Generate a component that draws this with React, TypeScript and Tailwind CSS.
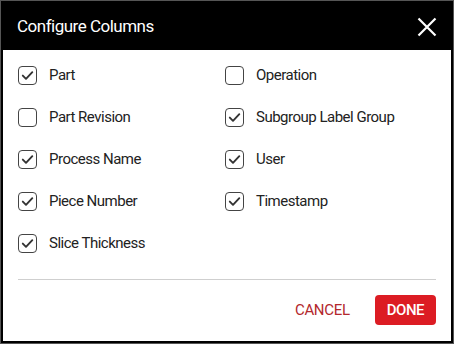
import React, { useState } from 'react';

type Column = { key: string; label: string; checked: boolean };

const initialColumns: Column[] = [
  { key: 'part', label: 'Part', checked: true },
  { key: 'operation', label: 'Operation', checked: false },
  { key: 'partRevision', label: 'Part Revision', checked: false },
  { key: 'subgroup', label: 'Subgroup Label Group', checked: true },
  { key: 'processName', label: 'Process Name', checked: true },
  { key: 'user', label: 'User', checked: true },
  { key: 'pieceNumber', label: 'Piece Number', checked: true },
  { key: 'timestamp', label: 'Timestamp', checked: true },
  { key: 'sliceThickness', label: 'Slice Thickness', checked: true },
];

const Checkbox: React.FC<{ checked: boolean }> = ({ checked }) => (
  <span className="flex h-[19px] w-[19px] shrink-0 items-center justify-center rounded-[4px] border-[1.5px] border-[#444]">
    {checked && (
      <svg width="13" height="13" viewBox="0 0 13 13" fill="none">
        <path d="M1.8 6.6 L5 9.8 L11.3 3.2" stroke="#333" strokeWidth="1.9" strokeLinecap="round" strokeLinejoin="round" />
      </svg>
    )}
  </span>
);

const App: React.FC = () => {
  const [columns, setColumns] = useState<Column[]>(initialColumns);

  const toggle = (key: string) => {
    setColumns((cols) => cols.map((c) => (c.key === key ? { ...c, checked: !c.checked } : c)));
  };

  return (
    <div className="h-[344px] w-[454px] border border-[#555] font-['Roboto',sans-serif]">
      <div className="flex h-full flex-col border-2 border-black bg-white">
        <div className="flex h-[47px] items-center justify-between bg-black pl-[14px] pr-[12px]">
          <h2 className="text-[17px] tracking-[-0.5px] text-white">Configure Columns</h2>
          <button className="flex h-[24px] w-[24px] items-center justify-center">
            <svg width="20" height="20" viewBox="0 0 20 20" fill="none">
              <path d="M1.5 1.5 L18.5 18.5 M18.5 1.5 L1.5 18.5" stroke="white" strokeWidth="2.2" />
            </svg>
          </button>
        </div>

        <div className="grid grid-cols-[207px_1fr] gap-y-[23px] px-[15px] pt-[16px]">
          {columns.map((c) => (
            <label
              key={c.key}
              onClick={() => toggle(c.key)}
              className="flex h-[19px] cursor-pointer items-center gap-[12px] text-[15px] tracking-[-0.5px] text-[#222]"
            >
              <Checkbox checked={c.checked} />
              <span>{c.label}</span>
            </label>
          ))}
        </div>

        <div className="mx-[15px] mt-[26px] border-t border-[#cfcfcf]" />

        <div className="flex items-center justify-end gap-[25px] px-[15px] pt-[15px]">
          <button className="text-[15px] tracking-[-0.3px] text-[#b3282d]">CANCEL</button>
          <button className="h-[30px] rounded-[4px] bg-[#dc1c23] px-[12px] text-[15px] font-medium tracking-[-0.5px] text-white">
            DONE
          </button>
        </div>
      </div>
    </div>
  );
};

export default App;
